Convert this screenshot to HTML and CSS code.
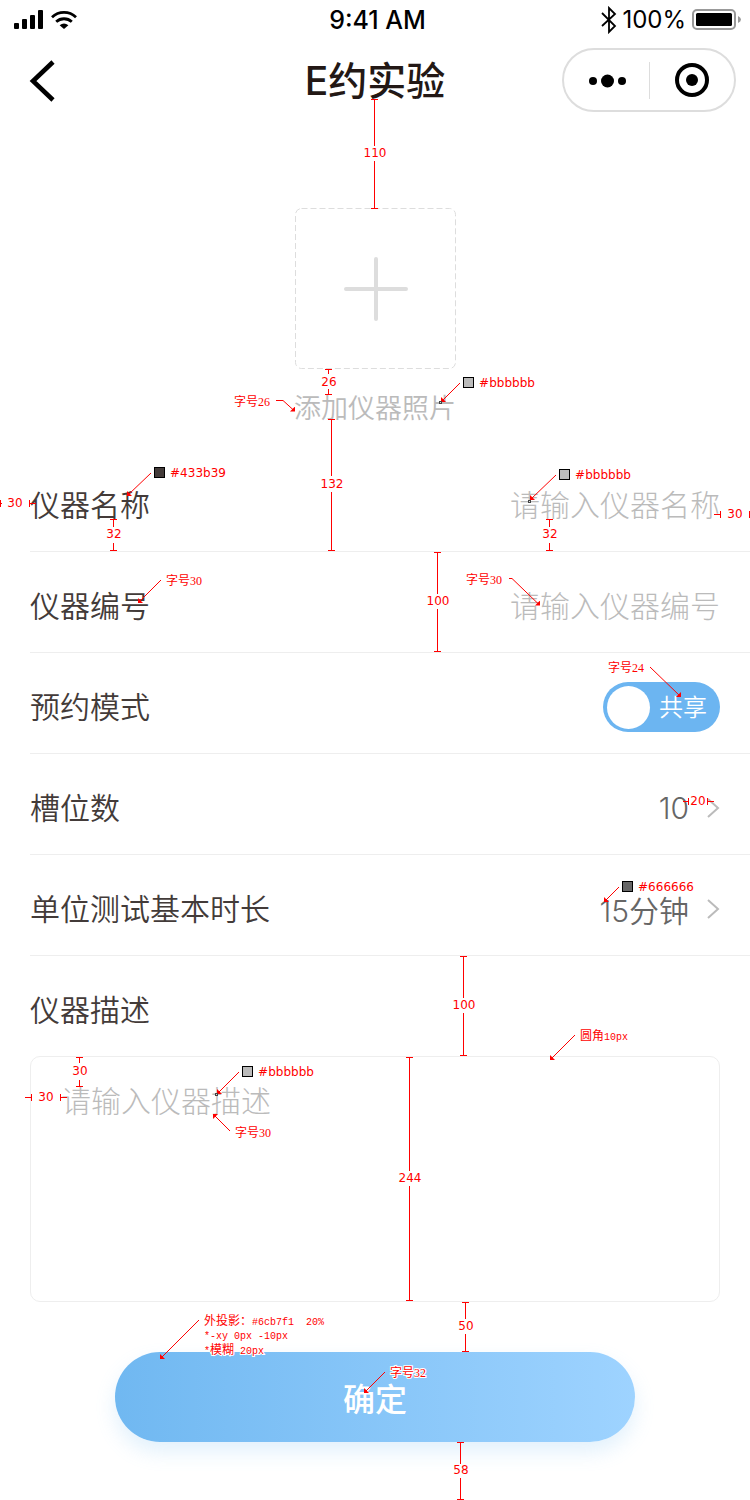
FILE: index.html
```html
<!DOCTYPE html>
<html lang="zh-CN">
<head>
<meta charset="utf-8">
<meta name="viewport" content="width=device-width, initial-scale=1">
<title>E约实验</title>
<link rel="stylesheet" href="styles.css">
</head>
<body>
<div class="page">
  <div class="status">
    <svg class="status-signal" width="64" height="40" viewBox="14 0 64 40" aria-hidden="true">
      <rect x="14" y="23" width="5" height="6" rx="1"/>
      <rect x="22" y="19" width="5" height="10" rx="1"/>
      <rect x="30" y="15" width="5" height="14" rx="1"/>
      <rect x="38" y="10" width="5" height="19" rx="1"/>
      <g fill="none" stroke="#000" stroke-width="2.8">
        <path d="M52 17.200a17.500 17.500 0 0 1 24 0"/>
        <path d="M56.200 21.800a11.500 11.500 0 0 1 15.600 0"/>
      </g>
      <path d="M64 29l-4.400-3.800a7 7 0 0 1 8.800 0z"/>
    </svg>
    <span class="status-time">9:41 AM</span>
    <span class="status-power">
      <svg width="18" height="28" viewBox="0 0 18 28" aria-hidden="true"><path d="M2 7l13 13-6 6V2l6 6L2 20" fill="none" stroke="#000" stroke-width="1.800"/></svg>
      <span>100%</span>
      <svg class="battery" width="49" height="22" viewBox="0 0 49 22" aria-hidden="true">
        <rect x="1" y="1" width="42" height="19" rx="4" fill="none" stroke="#999" stroke-width="2"/>
        <rect x="4" y="4" width="36" height="13" rx="1.500"/>
        <path d="M46 7q3 1.500 3 3.500t-3 3.500z" fill="#999"/>
      </svg>
    </span>
  </div>

  <header class="nav">
    <button class="nav-back" type="button" aria-label="返回">
      <svg width="30" height="44" viewBox="0 0 30 44" aria-hidden="true"><path d="M24 4L4 23l20 19" fill="none" stroke="#000" stroke-width="4.600"/></svg>
    </button>
    <h1 class="nav-title">E约实验</h1>
    <div class="capsule">
      <button class="capsule-button" type="button" aria-label="更多">
        <svg width="40" height="16" viewBox="0 0 40 16" aria-hidden="true"><circle cx="7" cy="9" r="4"/><circle cx="21.500" cy="9" r="6.500"/><circle cx="36" cy="9" r="4"/></svg>
      </button>
      <span class="capsule-line"></span>
      <button class="capsule-button" type="button" aria-label="关闭">
        <svg width="34" height="34" viewBox="0 0 34 34" aria-hidden="true"><circle cx="17" cy="17" r="15" fill="none" stroke="#000" stroke-width="4"/><circle cx="17" cy="17" r="6"/></svg>
      </button>
    </div>
  </header>

  <form class="form">
    <button class="upload" type="button">
      <svg width="161" height="161" viewBox="0 0 161 161" fill="none" stroke="#ddd" aria-hidden="true">
        <rect x=".5" y=".5" width="160" height="160" rx="6" stroke-dasharray="6 3"/>
        <path d="M51 81h60M81 51v60" stroke-width="4" stroke-linecap="round"/>
      </svg>
      <span class="upload-text">添加仪器照片</span>
    </button>

    <div class="row">
      <label class="label" for="name">仪器名称</label>
      <input class="input" id="name" type="text" placeholder="请输入仪器名称">
    </div>
    <div class="row">
      <label class="label" for="code">仪器编号</label>
      <input class="input" id="code" type="text" placeholder="请输入仪器编号">
    </div>
    <div class="row">
      <label class="label" for="mode">预约模式</label>
      <label class="switch"><input class="switch-knob" id="mode" type="checkbox" role="switch"><span class="switch-text">共享</span></label>
    </div>
    <div class="row">
      <span class="label" id="slots">槽位数</span>
      <button class="picker" type="button" aria-describedby="slots">10<svg class="chevron" width="14" height="22" viewBox="0 0 14 22" aria-hidden="true"><path d="M2 2l10 9-10 9"/></svg></button>
    </div>
    <div class="row">
      <span class="label" id="duration">单位测试基本时长</span>
      <button class="picker" type="button" aria-describedby="duration">15分钟<svg class="chevron" width="14" height="22" viewBox="0 0 14 22" aria-hidden="true"><path d="M2 2l10 9-10 9"/></svg></button>
    </div>
    <div class="row row-plain">
      <label class="label" for="description">仪器描述</label>
    </div>
    <textarea class="textarea" id="description" placeholder="请输入仪器描述"></textarea>
    <button class="submit" type="button">确定</button>
  </form>

  <svg class="notes" width="750" height="1500" viewBox="0 0 750 1500">
    <defs>
      <marker id="tip" viewBox="0 0 5 5" refX="4" refY="4" markerWidth="5" markerHeight="5" markerUnits="userSpaceOnUse"><path d="M0 5h5V0z" fill="red"/></marker>
      <marker id="tip-left" viewBox="0 0 5 5" refX="1" refY="4" markerWidth="5" markerHeight="5" markerUnits="userSpaceOnUse"><path d="M0 0v5h5z" fill="red"/></marker>
      <marker id="tip-up" viewBox="0 0 5 5" refX="1" refY="1" markerWidth="5" markerHeight="5" markerUnits="userSpaceOnUse"><path d="M0 5V0h5z" fill="red"/></marker>
    </defs>
    <g class="measure">
      <path d="M371 99.500h7M374.500 99v47M374.500 161v47M371 208.500h7"/>
      <path d="M325 369.500h7M328.500 369v5M328.500 389v5M325 394.500h7"/>
      <path d="M328 419.500h7M331.500 419v57M331.500 492v58M328 550.500h7"/>
      <path d="M110 519.500h7M113.500 519v8M113.500 543v7M110 550.500h7"/>
      <path d="M546 519.500h7M549.500 519v8M549.500 543v7M546 550.500h7"/>
      <path d="M434 552.500h7M437.500 552v42M437.500 609v42M434 651.500h7"/>
      <path d="M460 956.500h7M463.500 956v42M463.500 1013v42M460 1055.500h7"/>
      <path d="M76 1057.500h7M79.500 1057v6M79.500 1080v6M76 1086.500h7"/>
      <path d="M406 1057.500h7M409.500 1057v114M409.500 1186v114M406 1300.500h7"/>
      <path d="M462 1302.500h7M465.500 1302v17M465.500 1334v17M462 1351.500h7"/>
      <path d="M457 1442.500h7M460.500 1442v22M460.500 1478v21M457 1499.500h7"/>
      <path d="M0 503.500h2M.5 500v7M29.500 500v7M29 503.500h7"/>
      <path d="M714 514.500h6M720.500 511v7M749.500 511v7"/>
      <path d="M683 801.500h6M688.500 798v7M707.500 798v7M708 801.500h6"/>
      <path d="M25 1097.500h6M31.500 1094v7M60.500 1094v7M61 1097.500h6"/>
    </g>
    <g class="leader">
      <path marker-end="url(#tip-left)" d="M460 383l-18 18"/>
      <path marker-end="url(#tip)" d="M276 400.500h7l11 10"/>
      <path marker-end="url(#tip-left)" d="M151 473l-23 22"/>
      <path marker-end="url(#tip-left)" d="M556 475l-25 24"/>
      <path marker-end="url(#tip-left)" d="M161 580l-22 22"/>
      <path marker-end="url(#tip)" d="M509 578.500h3l27 26"/>
      <path marker-end="url(#tip)" d="M650 667l30 29"/>
      <path marker-end="url(#tip-left)" d="M619 887l-14 14"/>
      <path marker-end="url(#tip-left)" d="M575 1035l-24 24"/>
      <path marker-end="url(#tip-left)" d="M239 1072l-21 21"/>
      <path marker-end="url(#tip-up)" d="M230 1131l-16-16"/>
      <path marker-end="url(#tip-left)" d="M199 1320l-38 38"/>
      <path marker-end="url(#tip-left)" d="M385 1372l-20 20"/>
    </g>
    <g stroke="#000">
      <rect x="463.500" y="377.500" width="10" height="10" fill="#bbb"/>
      <rect x="154.500" y="467.500" width="10" height="10" fill="#433b39"/>
      <rect x="559.500" y="469.500" width="10" height="10" fill="#bbb"/>
      <rect x="622.500" y="881.500" width="10" height="10" fill="#666"/>
      <rect x="242.500" y="1066.500" width="10" height="10" fill="#bbb"/>
    </g>
    <g stroke="#444" fill="#ddd">
      <rect x="439.500" y="401.500" width="2" height="2"/>
      <rect x="528.500" y="500.500" width="2" height="2"/>
      <rect x="215.500" y="1093.500" width="2" height="2"/>
    </g>
    <g class="number">
      <text x="375" y="157">110</text>
      <text x="329" y="386">26</text>
      <text x="332" y="488">132</text>
      <text x="114" y="538">32</text>
      <text x="550" y="538">32</text>
      <text x="438" y="605">100</text>
      <text x="464" y="1009">100</text>
      <text x="80" y="1075">30</text>
      <text x="410" y="1182">244</text>
      <text x="466" y="1330">50</text>
      <text x="461" y="1474">58</text>
      <text x="15" y="507">30</text>
      <text x="735" y="518">30</text>
      <text x="698" y="805">20</text>
      <text x="46" y="1101">30</text>
      <text x="507" y="387">#bbbbbb</text>
      <text x="198" y="477">#433b39</text>
      <text x="603" y="479">#bbbbbb</text>
      <text x="666" y="891">#666666</text>
      <text x="286" y="1076">#bbbbbb</text>
    </g>
    <g class="remark">
      <text x="234" y="406">字号26</text>
      <text x="166" y="585">字号30</text>
      <text x="466" y="584">字号30</text>
      <text x="608" y="672">字号24</text>
      <text x="235" y="1137">字号30</text>
      <text x="390" y="1377">字号32</text>
      <text x="580" y="1040">圆角<tspan class="mono">10px</tspan></text>
      <text x="204" y="1325">外投影：<tspan class="mono" x="252">#6cb7f1&#160;&#160;20%</tspan></text>
      <text class="mono" x="204" y="1339">*-xy 0px -10px</text>
      <text x="204" y="1354"><tspan class="mono">*</tspan>模糊<tspan class="mono">&#160;20px</tspan></text>
    </g>
  </svg>
</div>
</body>
</html>
```
FILE: styles.css
```css
* { box-sizing: border-box; }
body {
  margin: 0;
  background: #fff;
  font-family: Inter, "Noto Sans CJK SC", sans-serif;
  color: #433b39;
}
button, input, textarea { font: inherit; color: inherit; }
button { padding: 0; border: 0; background: none; cursor: pointer; }
.page { position: relative; overflow: hidden; }

.status {
  display: grid;
  grid-template-columns: 1fr auto 1fr;
  align-items: center;
  height: 40px;
  padding: 0 9px 0 14px;
  color: #000;
  font-size: 24px;
  line-height: 40px;
}
.status-time { font-size: 25px; font-weight: 500; }
.status-power {
  display: flex;
  justify-content: flex-end;
  align-items: center;
  gap: 4px;
}
.battery { margin-left: 2px; }

.nav {
  display: grid;
  grid-template-columns: 1fr auto 1fr;
  align-items: center;
  height: 80px;
  padding: 0 14px;
}
.nav-back { display: flex; justify-self: start; margin-left: 15px; }
.nav-title {
  margin: 0;
  padding-top: 2px;
  font-size: 39px;
  line-height: 48px;
  font-weight: 500;
  color: #231815;
}
.capsule {
  display: flex;
  align-items: center;
  justify-self: end;
  width: 174px;
  height: 64px;
  border: 2px solid #ddd;
  border-radius: 32px;
}
.capsule-button {
  display: flex;
  flex: 1;
  align-items: center;
  justify-content: center;
  height: 60px;
}
.capsule-line { width: 1px; height: 37px; background: #ddd; }

.form { display: flex; flex-direction: column; padding-top: 88px; }
.upload {
  display: flex;
  flex-direction: column;
  align-items: center;
  align-self: center;
  gap: 20px;
  margin-bottom: 22px;
}
.upload-text {
  font-size: 27px;
  line-height: 40px;
  font-weight: 350;
  color: #bbb;
}
.row {
  display: flex;
  align-items: center;
  justify-content: space-between;
  height: 101px;
  margin-left: 30px;
  padding: 8px 30px 0 0;
  border-bottom: 1px solid #eee;
  font-size: 30px;
  font-weight: 350;
}
.row-plain { height: 100px; border: 0; }
.label { padding-bottom: 4px; }
.input {
  flex: 1;
  min-width: 0;
  height: 60px;
  padding: 0;
  border: 0;
  outline: 0;
  background: none;
  font-weight: 300;
  text-align: right;
}
.input::placeholder, .textarea::placeholder { color: #bbb; opacity: 1; }
.switch {
  display: flex;
  align-items: center;
  gap: 9px;
  width: 117px;
  height: 50px;
  padding-left: 4px;
  border-radius: 25px;
  background: #6cb5f1;
  color: #fff;
  font-size: 24px;
}
.switch-text { padding-bottom: 4px; }
.switch-knob {
  appearance: none;
  width: 43px;
  height: 43px;
  margin: 0;
  border-radius: 50%;
  background: #fff;
}
.picker { display: flex; align-items: center; gap: 17px; color: #666; }
.chevron { fill: none; stroke: #bbb; stroke-width: 2px; }
.textarea {
  display: block;
  height: 246px;
  margin: 0 30px 50px;
  padding: 22px 30px;
  border: 1px solid #eee;
  border-radius: 10px;
  outline: 0;
  resize: none;
  background: none;
  font-size: 30px;
  line-height: 44px;
  font-weight: 300;
}
.submit {
  align-self: center;
  width: 520px;
  max-width: 100%;
  height: 90px;
  margin-bottom: 58px;
  border-radius: 45px;
  background: linear-gradient(90deg, #70b8f1, #9ed3ff);
  box-shadow: 0 10px 20px rgba(108, 183, 241, .2);
  color: #fff;
  font-size: 32px;
  font-weight: 500;
}

.notes { position: absolute; top: 0; left: 0; pointer-events: none; }
.measure { fill: none; stroke: #f00; shape-rendering: crispEdges; }
.leader { fill: none; stroke: #f00; }
.number {
  fill: #f00;
  font-family: "DejaVu Sans", sans-serif;
  font-size: 12px;
  text-anchor: middle;
}
.remark {
  fill: #f00;
  stroke: #fff;
  stroke-width: 2px;
  paint-order: stroke;
  font-family: "Liberation Serif", "Noto Sans CJK SC", serif;
  font-size: 12px;
}
.mono { font-family: "Liberation Mono", monospace; font-size: 10px; }
```
